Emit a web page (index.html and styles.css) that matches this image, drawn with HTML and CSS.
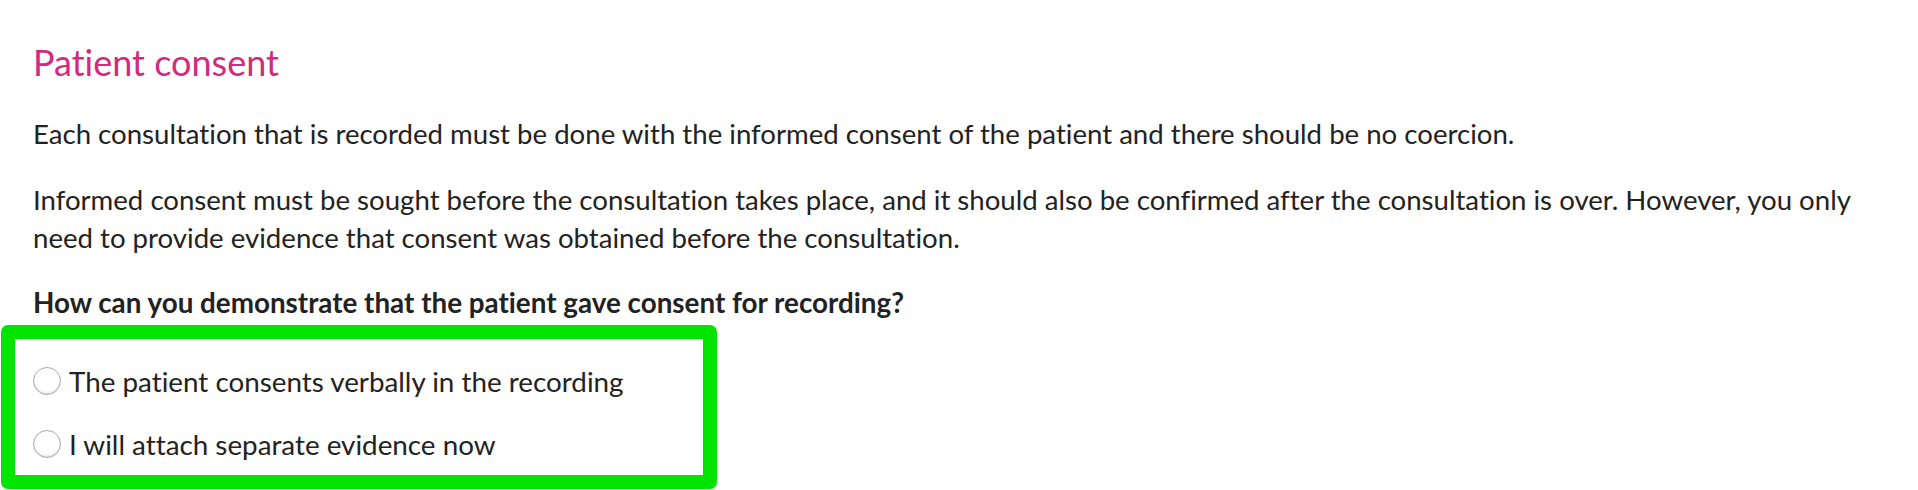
FILE: index.html
```html
<!DOCTYPE html>
<html lang="en">
<head>
<meta charset="utf-8">
<title>Patient consent</title>
<link rel="stylesheet" href="styles.css">
</head>
<body>
<main class="page">
  <h1 class="title">Patient consent</h1>
  <p class="para p1">Each consultation that is recorded must be done with the informed consent of the patient and there should be no coercion.</p>
  <p class="para p2">Informed consent must be sought before the consultation takes place, and it should also be confirmed after the consultation is over. However, you only need to provide evidence that consent was obtained before the consultation.</p>
  <p class="para question">How can you demonstrate that the patient gave consent for recording?</p>
  <div class="highlight">
    <label class="option"><span class="radio"></span><span class="option-text">The patient consents verbally in the recording</span></label>
    <label class="option"><span class="radio"></span><span class="option-text">I will attach separate evidence now</span></label>
  </div>
</main>
</body>
</html>
```
FILE: styles.css
```css
html, body {
  margin: 0;
  padding: 0;
  background: #ffffff;
}
body {
  font-family: Lato, "Noto Sans", "Liberation Sans", sans-serif;
  font-variant-ligatures: none;
  color: #222222;
  width: 1918px;
  height: 490px;
  overflow: hidden;
}
.page {
  padding: 40px 25px 0 33px;
  display: flex;
  flex-direction: column;
  align-items: flex-start;
}
.title {
  margin: 0;
  font-size: 36px;
  line-height: 44px;
  font-weight: 400;
  color: #d22a7e;
}
.para {
  margin: 0;
  font-size: 27.6px;
  line-height: 38px;
}
.p1 { margin-top: 31px; }
.p2 { margin-top: 28px; }
.question { margin-top: 27px; font-weight: 700; font-size: 27.8px; }
.highlight {
  margin: 3px 0 0 -32px;
  width: 716px;
  box-sizing: border-box;
  border: 14px solid #00e400;
  border-radius: 7px;
  padding: 24px 0 11px 18px;
  display: flex;
  flex-direction: column;
  gap: 25px;
}
.option {
  display: flex;
  align-items: center;
  gap: 8px;
  font-size: 27.8px;
  line-height: 38px;
}
.radio {
  width: 26px;
  height: 26px;
  border-radius: 50%;
  border: 1px solid #a9a9a9;
  background: radial-gradient(circle at 50% 40%, #ffffff 55%, #eeeeee 80%, #d8d8d8 100%);
  box-shadow: inset 0 -1px 1px rgba(0,0,0,0.08);
  flex: none;
  margin-top: -2px;
}
```
